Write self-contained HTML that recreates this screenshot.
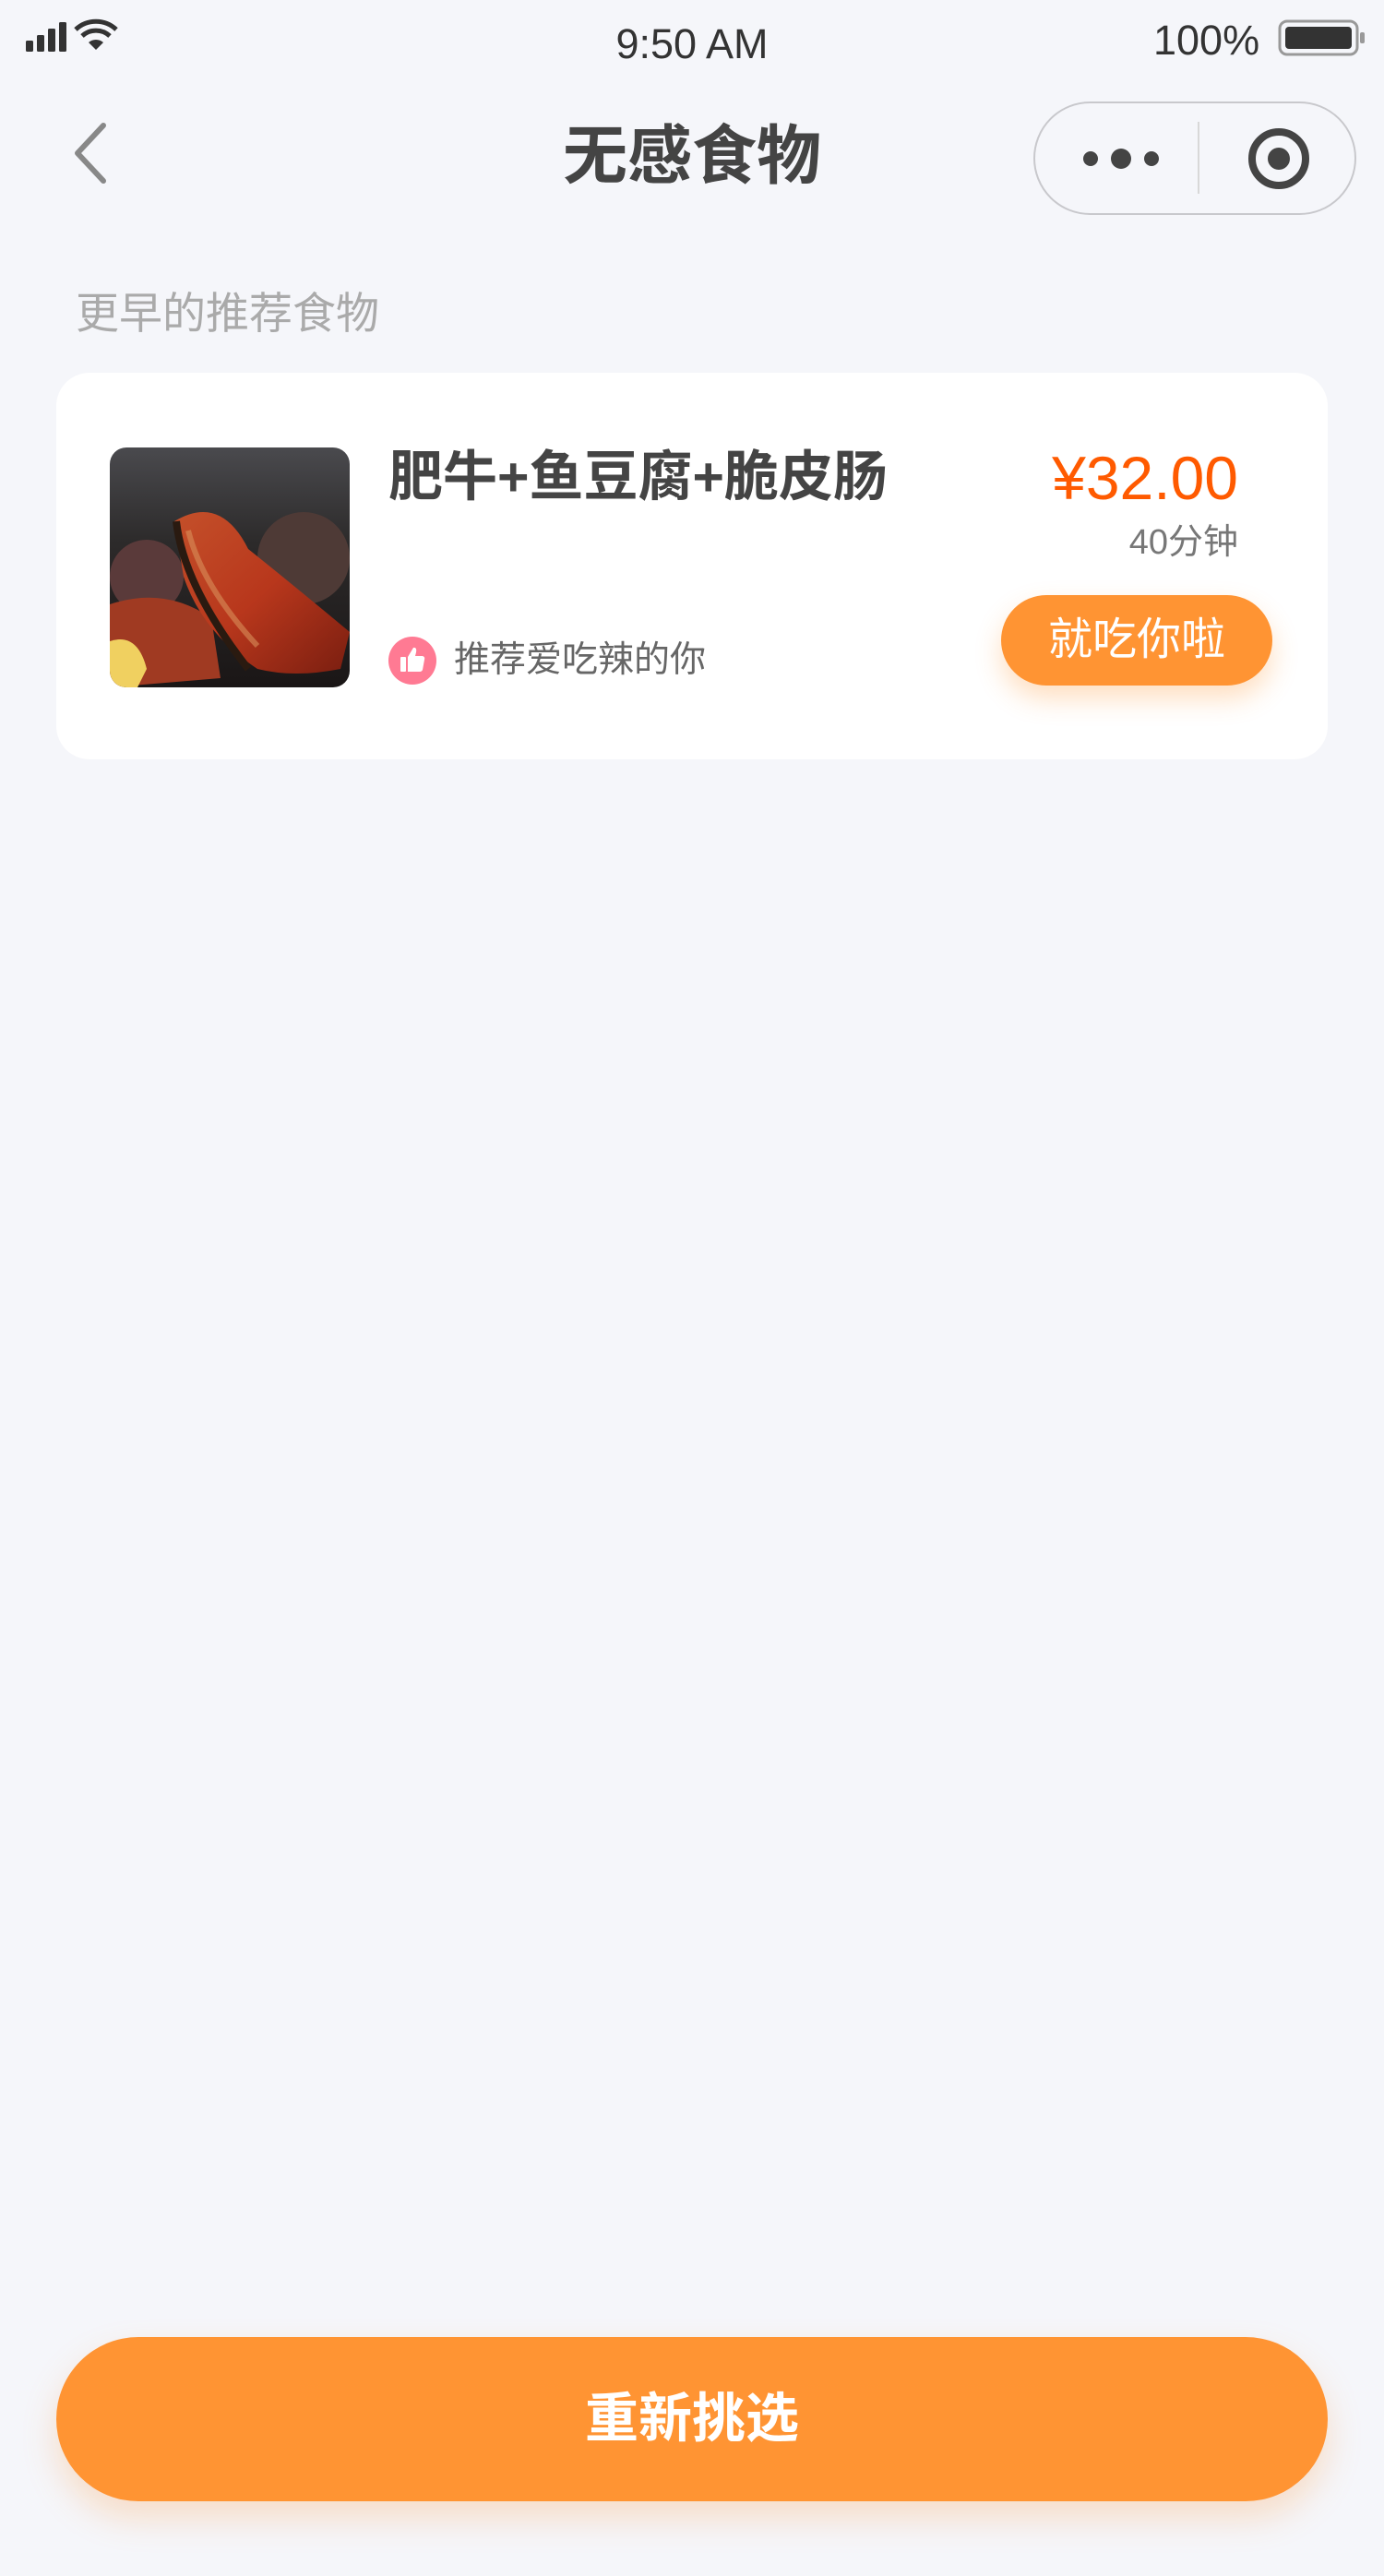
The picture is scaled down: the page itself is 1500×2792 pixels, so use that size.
<!DOCTYPE html>
<html><head><meta charset="utf-8">
<style>
*{margin:0;padding:0;box-sizing:border-box}
html,body{width:1500px;height:2792px;background:#f5f6fa;font-family:"Liberation Sans","Noto Sans CJK SC",sans-serif;overflow:hidden;position:relative}
.abs{position:absolute}
</style></head><body>
<svg class="abs" style="left:26px;top:20px" width="130" height="44" viewBox="0 0 130 44">
<rect x="2" y="24" width="8" height="12" rx="1.5" fill="#333"/>
<rect x="14" y="18" width="8" height="18" rx="1.5" fill="#333"/>
<rect x="26" y="11" width="8" height="25" rx="1.5" fill="#333"/>
<rect x="38" y="4" width="8" height="32" rx="1.5" fill="#333"/>
<path d="M78 34 L70 26 A12 12 0 0 1 86 26 Z" fill="#333"/>
<path d="M63 19 A22 22 0 0 1 93 19" stroke="#333" stroke-width="5" fill="none"/>
<path d="M56 12 A32 32 0 0 1 100 12" stroke="#333" stroke-width="5" fill="none"/>
</svg>
<div class="abs" style="left:0;width:1500px;top:20px;text-align:center;font-size:45px;color:#333;line-height:56px">9:50 AM</div>
<div class="abs" style="left:1250px;top:16px;font-size:45px;color:#333;line-height:56px">100%</div>
<svg class="abs" style="left:1385px;top:20px" width="100" height="44" viewBox="0 0 100 44">
<rect x="2" y="3" width="84" height="36" rx="8" fill="none" stroke="#999" stroke-width="3"/>
<rect x="8" y="9" width="72" height="24" rx="4" fill="#333"/>
<rect x="89" y="15" width="5" height="12" rx="2" fill="#999"/>
</svg>
<svg class="abs" style="left:72px;top:130px" width="50" height="72" viewBox="0 0 50 72">
<path d="M40 6 L12 36 L40 66" stroke="#888" stroke-width="6" fill="none" stroke-linecap="round" stroke-linejoin="round"/>
</svg>
<div class="abs" style="left:0;width:1500px;top:128px;text-align:center;font-size:70px;font-weight:bold;color:#444;line-height:82px">无感食物</div>
<div class="abs" style="left:1120px;top:110px;width:350px;height:123px;border:2px solid #c8c8cc;border-radius:62px;background:#f5f6fa"></div>
<div class="abs" style="left:1298px;top:132px;width:2px;height:78px;background:#d8d8d8"></div>
<svg class="abs" style="left:1170px;top:152px" width="90" height="40" viewBox="0 0 90 40">
<circle cx="12" cy="20" r="8" fill="#444"/><circle cx="45" cy="20" r="11" fill="#444"/><circle cx="78" cy="20" r="8" fill="#444"/>
</svg>
<svg class="abs" style="left:1350px;top:136px" width="72" height="72" viewBox="0 0 72 72">
<circle cx="36" cy="36" r="29" fill="none" stroke="#444" stroke-width="8"/><circle cx="36" cy="36" r="12" fill="#444"/>
</svg>
<div class="abs" style="left:82px;top:310px;font-size:47px;color:#aaa;line-height:60px">更早的推荐食物</div>
<div class="abs" style="left:61px;top:404px;width:1378px;height:419px;background:#fff;border-radius:36px"></div>
<svg class="abs" style="left:119px;top:485px;border-radius:18px" width="260" height="260" viewBox="0 0 260 260">
<defs><linearGradient id="bg" x1="0" y1="0" x2="0" y2="1"><stop offset="0" stop-color="#4a4a4e"/><stop offset="0.4" stop-color="#2c2a2a"/><stop offset="1" stop-color="#1a1616"/></linearGradient>
<linearGradient id="m" x1="0" y1="0" x2="1" y2="1"><stop offset="0" stop-color="#c4502a"/><stop offset="0.5" stop-color="#b8371c"/><stop offset="1" stop-color="#7a1e10"/></linearGradient></defs>
<rect width="260" height="260" fill="url(#bg)"/>
<ellipse cx="210" cy="120" rx="50" ry="50" fill="#4e3a36"/>
<ellipse cx="40" cy="140" rx="40" ry="40" fill="#5a3a3a"/>
<path d="M0 170 Q60 150 110 185 L120 250 L0 260 Z" fill="#a03a22"/>
<path d="M0 210 Q30 200 40 240 L30 260 L0 260 Z" fill="#f0d060"/>
<path d="M70 80 Q120 50 150 110 Q200 150 260 200 L250 240 Q200 250 160 240 Q100 200 80 140 Z" fill="url(#m)"/>
<path d="M72 80 Q80 150 150 240" stroke="#2a1a10" stroke-width="8" fill="none"/>
<path d="M85 90 Q100 150 160 215" stroke="#d8905a" stroke-width="6" fill="none" opacity="0.6"/>
</svg>
<div class="abs" style="left:421px;top:482px;font-size:59px;font-weight:bold;color:#444;line-height:70px;white-space:nowrap">肥牛+鱼豆腐+脆皮肠</div>
<svg class="abs" style="left:421px;top:690px" width="52" height="52" viewBox="0 0 52 52">
<circle cx="26" cy="26" r="26" fill="#ff7a93"/>
<rect x="13" y="22" width="6" height="16" rx="1" fill="#fff"/>
<path d="M21 22 L27 12 Q31 11 30 17 L29 21 L37 21 Q40 22 39 25 L37 36 Q36 38 34 38 L21 38 Z" fill="#fff"/>
</svg>
<div class="abs" style="left:492px;top:690px;font-size:39px;color:#666;line-height:52px">推荐爱吃辣的你</div>
<div class="abs" style="right:158px;top:480px;font-size:66px;color:#ff5a00;line-height:76px">¥32.00</div>
<div class="abs" style="right:158px;top:563px;font-size:38px;color:#777;line-height:50px">40分钟</div>
<div class="abs" style="left:1085px;top:645px;width:294px;height:98px;border-radius:49px;background:#ff9433;box-shadow:0 14px 28px rgba(255,148,51,0.3);color:#fff;font-size:48px;line-height:98px;text-align:center">就吃你啦</div>
<div class="abs" style="left:61px;top:2533px;width:1378px;height:178px;border-radius:89px;background:#ff9433;box-shadow:0 18px 36px rgba(255,148,51,0.25);color:#fff;font-size:58px;font-weight:bold;line-height:178px;text-align:center">重新挑选</div>
</body></html>
